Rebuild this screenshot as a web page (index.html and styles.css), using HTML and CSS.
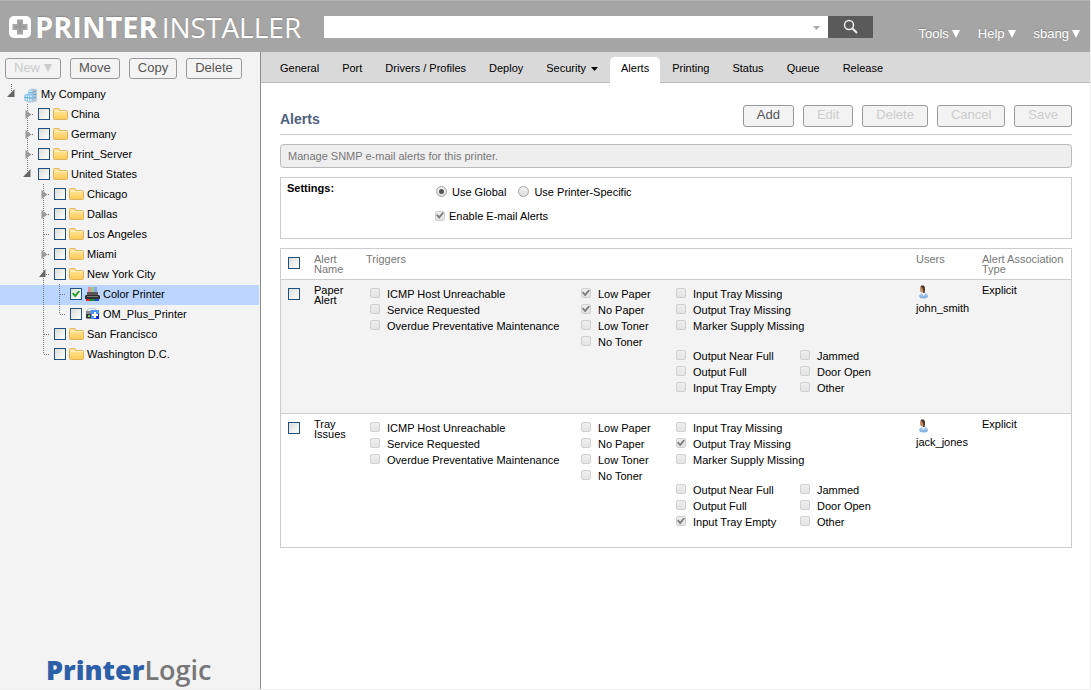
FILE: index.html
```html
<!DOCTYPE html>
<html lang="en">
<head>
<meta charset="utf-8">
<title>Printer Installer - Alerts</title>
<link rel="stylesheet" href="styles.css">
</head>
<body>
<svg class="defs" aria-hidden="true">
  <defs>
    <linearGradient id="gold" x1="0" y1="0" x2="0" y2="1"><stop offset="0" stop-color="#ffe9a6"/><stop offset="1" stop-color="#fbcb55"/></linearGradient>
    <linearGradient id="shirt" x1="0" y1="0" x2="0" y2="1"><stop offset="0" stop-color="#b9d6f3"/><stop offset="1" stop-color="#7eaadb"/></linearGradient>
  </defs>
  <symbol id="arrow" viewBox="0 0 8 8"><path d="M0 0h8L4 8z" fill="currentColor"/></symbol>
  <symbol id="folder" viewBox="0 0 15 15">
    <path d="M.500 3V2.500Q.500 1.500 1.500 1.500h4q1 0 1 1v1h7q1 0 1 1v7q0 1-1 1h-12q-1 0-1-1z" fill="url(#gold)" stroke="#e0b458"/>
    <path d="M1.500 4.500h12" stroke="#fff0bd"/>
  </symbol>
  <symbol id="building" viewBox="0 0 15 16">
    <path d="M5 2l4-1.500 5 .500v13l-5 1.500-4-1z" fill="#a8d6f3"/>
    <path d="M9 1l5 .500v12.500l-4 1z" fill="#b9c3cb"/>
    <path d="M1 7l4-1 5 1v7l-4 1.500-5-2z" fill="#8cc6ee"/>
    <path d="M6 3v3M8 3v3M3 8v5M5.500 8v6M8 8v6" stroke="#fff" stroke-width="1"/>
    <path d="M1 10l9 1M5 5h5M10.500 4h3M10.500 7h3M10.500 10h3" stroke="#4ba3dc" stroke-width="1"/>
    <path d="M0 13l5 2.500h5l5-2-5 .500-4 .500z" fill="#c9ced3"/>
  </symbol>
  <symbol id="printer" viewBox="0 0 15 15">
    <path d="M3 0h3v5H3z" fill="#e88b9d"/><path d="M6 0h3v5H6z" fill="#8dd18b"/><path d="M9 0h3v5H9z" fill="#8ca6ed"/>
    <path d="M2 5h11v4H2z" fill="#5b5555"/><path d="M1 8h13l1 1v3H0V9z" fill="#302f32"/>
    <path d="M2 9.500h11" stroke="#777"/>
    <path d="M1 12h4v2H1z" fill="#d82a2a"/><path d="M5 12h5v2H5z" fill="#168b33"/><path d="M10 12h4v2h-4z" fill="#2444d5"/>
  </symbol>
  <symbol id="plusprinter" viewBox="0 0 15 15">
    <path d="M3 1.500h7l1 2.500H2z" fill="#f5f8fb" stroke="#c3cad2"/>
    <path d="M1 4h7v8H2l-1-1z" fill="#858a92"/><path d="M1 7h5v4H1z" fill="#35393f"/>
    <path d="M3 8h2v2H3z" fill="#7ed04e"/>
    <rect x="6" y="3" width="8" height="9" fill="#4a92f5"/><path d="M9 12l5-6v6z" fill="#0b2ad0"/>
    <path d="M10 5v6M7 8h6" stroke="#fff" stroke-width="2"/>
  </symbol>
  <symbol id="user" viewBox="0 0 12 14">
    <path d="M1 11q1-3 4.500-3.500T10 11q.500 2-4 2.500-5 0-5-2.500z" fill="url(#shirt)"/>
    <path d="M3.500 7.500L5.500 11l2-3z" fill="#f1f5fa"/>
    <ellipse cx="4.500" cy="4" rx="2.500" ry="3.500" fill="#c08a62"/>
    <path d="M2.500 1.500Q3 .300 5 .500T7 5L6.500 8 5 8q1-3-.500-5z" fill="#4c3426"/>
  </symbol>
  <symbol id="line" viewBox="0 0 16 20"><path d="M8.500 0v20M9 10.500h6" class="dots"/></symbol>
  <symbol id="pipe" viewBox="0 0 16 20"><path d="M8.500 0v20" class="dots"/></symbol>
  <symbol id="end" viewBox="0 0 16 20"><path d="M8.500 0v10M9 10.500h6" class="dots"/></symbol>
  <symbol id="shut" viewBox="0 0 16 20"><path d="M8.500 0v20M9 10.500h6" class="dots"/><path d="M6.500 6l6 4.500-6 4.500z" fill="#999"/></symbol>
  <symbol id="open" viewBox="0 0 16 20"><path d="M8.500 0v7" class="dots"/><path d="M11.500 5v8H4z" fill="#666"/></symbol>
  <symbol id="openmid" viewBox="0 0 16 20"><path d="M8.500 0v20M9 10.500h6" class="dots"/><path d="M10.500 5v8H4z" fill="#666"/></symbol>
</svg>

<header class="topbar">
  <div class="brand">
    <svg class="brand-mark" viewBox="0 0 24 24" aria-hidden="true"><rect x="1" y="1" width="22" height="22" rx="5" fill="#fff"/><path d="M9 4.500h6V9h4.500v6H15v4.500H9V15H4.500V9H9z" fill="#a5a5a5"/><path d="M11 7h2v4h4v2h-4v4h-2v-4H7v-2h4z" fill="#999"/></svg>
    <span class="brand-bold">PRINTER</span><span class="brand-light">INSTALLER</span>
  </div>
  <form class="search" role="search">
    <input class="search-input" type="text" aria-label="Search">
    <svg class="search-caret" viewBox="0 0 7 4" aria-hidden="true"><path d="M0 0h7L3.500 4z" fill="#aaa"/></svg>
    <button class="search-button" type="button" aria-label="Search"><svg viewBox="0 0 16 16" aria-hidden="true"><circle cx="6" cy="6" r="4.500" fill="none" stroke="#eee" stroke-width="1.500"/><path d="M9.500 9.500l4.500 4.500" stroke="#eee" stroke-width="2"/></svg></button>
  </form>
  <nav class="account">
    <a href="#">Tools<svg class="arrow"><use href="#arrow"/></svg></a><a href="#">Help<svg class="arrow"><use href="#arrow"/></svg></a><a href="#">sbang<svg class="arrow"><use href="#arrow"/></svg></a>
  </nav>
</header>

<div class="workspace">
  <aside class="sidebar">
    <div class="tree-actions">
      <button class="btn" disabled>New<svg class="arrow"><use href="#arrow"/></svg></button><button class="btn">Move</button><button class="btn">Copy</button><button class="btn">Delete</button>
    </div>
    <ul class="tree">
      <li class="node root"><svg class="guide"><use href="#open"/></svg><svg class="icon"><use href="#building"/></svg><span>My Company</span></li>
      <li class="node l1"><svg class="guide"><use href="#shut"/></svg><label><input class="box" type="checkbox"><svg class="icon"><use href="#folder"/></svg>China</label></li>
      <li class="node l1"><svg class="guide"><use href="#shut"/></svg><label><input class="box" type="checkbox"><svg class="icon"><use href="#folder"/></svg>Germany</label></li>
      <li class="node l1"><svg class="guide"><use href="#shut"/></svg><label><input class="box" type="checkbox"><svg class="icon"><use href="#folder"/></svg>Print_Server</label></li>
      <li class="node l1"><svg class="guide"><use href="#open"/></svg><label><input class="box" type="checkbox"><svg class="icon"><use href="#folder"/></svg>United States</label></li>
      <li class="node l2"><svg class="guide"><use href="#shut"/></svg><label><input class="box" type="checkbox"><svg class="icon"><use href="#folder"/></svg>Chicago</label></li>
      <li class="node l2"><svg class="guide"><use href="#shut"/></svg><label><input class="box" type="checkbox"><svg class="icon"><use href="#folder"/></svg>Dallas</label></li>
      <li class="node l2"><svg class="guide"><use href="#line"/></svg><label><input class="box" type="checkbox"><svg class="icon"><use href="#folder"/></svg>Los Angeles</label></li>
      <li class="node l2"><svg class="guide"><use href="#shut"/></svg><label><input class="box" type="checkbox"><svg class="icon"><use href="#folder"/></svg>Miami</label></li>
      <li class="node l2"><svg class="guide"><use href="#openmid"/></svg><label><input class="box" type="checkbox"><svg class="icon"><use href="#folder"/></svg>New York City</label></li>
      <li class="node l2 selected"><svg class="guide"><use href="#pipe"/></svg><svg class="guide"><use href="#line"/></svg><label><input class="box" type="checkbox" checked><svg class="icon"><use href="#printer"/></svg>Color Printer</label></li>
      <li class="node l2"><svg class="guide"><use href="#pipe"/></svg><svg class="guide"><use href="#end"/></svg><label><input class="box" type="checkbox"><svg class="icon"><use href="#plusprinter"/></svg>OM_Plus_Printer</label></li>
      <li class="node l2"><svg class="guide"><use href="#line"/></svg><label><input class="box" type="checkbox"><svg class="icon"><use href="#folder"/></svg>San Francisco</label></li>
      <li class="node l2"><svg class="guide"><use href="#end"/></svg><label><input class="box" type="checkbox"><svg class="icon"><use href="#folder"/></svg>Washington D.C.</label></li>
    </ul>
    <div class="vendor"><span class="vendor-bold">Printer</span><span class="vendor-light">Logic</span></div>
  </aside>

  <main class="main">
    <nav class="tabs">
      <a href="#">General</a><a href="#">Port</a><a href="#">Drivers / Profiles</a><a href="#">Deploy</a><a href="#">Security<svg class="tab-caret" viewBox="0 0 7 4" aria-hidden="true"><path d="M0 0h7L3.500 4z"/></svg></a><a href="#" class="active" aria-current="page">Alerts</a><a href="#">Printing</a><a href="#">Status</a><a href="#">Queue</a><a href="#">Release</a>
    </nav>
    <section class="content">
      <div class="heading">
        <h1>Alerts</h1>
        <div class="actions">
          <button class="btn wide">Add</button><button class="btn wide" disabled>Edit</button><button class="btn wide" disabled>Delete</button><button class="btn wide" disabled>Cancel</button><button class="btn wide" disabled>Save</button>
        </div>
      </div>
      <p class="info">Manage SNMP e-mail alerts for this printer.</p>
      <div class="settings">
        <strong>Settings:</strong>
        <div class="options">
          <div class="radios">
            <label><input class="radio" type="radio" name="scope" checked>Use Global</label>
            <label><input class="radio" type="radio" name="scope">Use Printer-Specific</label>
          </div>
          <label class="enable"><input class="tick" type="checkbox" checked disabled>Enable E-mail Alerts</label>
        </div>
      </div>
      <table class="alerts">
        <colgroup><col class="c-check"><col class="c-name"><col><col class="c-users"><col class="c-type"></colgroup>
        <thead>
          <tr><th class="pick"><input class="box" type="checkbox" aria-label="Select all alerts"></th><th>Alert Name</th><th>Triggers</th><th>Users</th><th>Alert Association Type</th></tr>
        </thead>
        <tbody>
          <tr class="shaded">
            <td class="pick"><input class="box" type="checkbox" aria-label="Select Paper Alert"></td>
            <td>Paper<br>Alert</td>
            <td class="trigger-cell"><div class="triggers">
              <div class="group">
                <label><input class="tick" type="checkbox" disabled>ICMP Host Unreachable</label>
                <label><input class="tick" type="checkbox" disabled>Service Requested</label>
                <label><input class="tick" type="checkbox" disabled>Overdue Preventative Maintenance</label>
              </div>
              <div class="group">
                <label><input class="tick" type="checkbox" checked disabled>Low Paper</label>
                <label><input class="tick" type="checkbox" checked disabled>No Paper</label>
                <label><input class="tick" type="checkbox" disabled>Low Toner</label>
                <label><input class="tick" type="checkbox" disabled>No Toner</label>
              </div>
              <div class="group">
                <label><input class="tick" type="checkbox" disabled>Input Tray Missing</label>
                <label><input class="tick" type="checkbox" disabled>Output Tray Missing</label>
                <label><input class="tick" type="checkbox" disabled>Marker Supply Missing</label>
                <label class="apart"><input class="tick" type="checkbox" disabled>Output Near Full</label>
                <label><input class="tick" type="checkbox" disabled>Output Full</label>
                <label><input class="tick" type="checkbox" disabled>Input Tray Empty</label>
              </div>
              <div class="group low">
                <label><input class="tick" type="checkbox" disabled>Jammed</label>
                <label><input class="tick" type="checkbox" disabled>Door Open</label>
                <label><input class="tick" type="checkbox" disabled>Other</label>
              </div>
            </div></td>
            <td><svg class="user-icon"><use href="#user"/></svg>john_smith</td>
            <td>Explicit</td>
          </tr>
          <tr>
            <td class="pick"><input class="box" type="checkbox" aria-label="Select Tray Issues"></td>
            <td>Tray<br>Issues</td>
            <td class="trigger-cell"><div class="triggers">
              <div class="group">
                <label><input class="tick" type="checkbox" disabled>ICMP Host Unreachable</label>
                <label><input class="tick" type="checkbox" disabled>Service Requested</label>
                <label><input class="tick" type="checkbox" disabled>Overdue Preventative Maintenance</label>
              </div>
              <div class="group">
                <label><input class="tick" type="checkbox" disabled>Low Paper</label>
                <label><input class="tick" type="checkbox" disabled>No Paper</label>
                <label><input class="tick" type="checkbox" disabled>Low Toner</label>
                <label><input class="tick" type="checkbox" disabled>No Toner</label>
              </div>
              <div class="group">
                <label><input class="tick" type="checkbox" disabled>Input Tray Missing</label>
                <label><input class="tick" type="checkbox" checked disabled>Output Tray Missing</label>
                <label><input class="tick" type="checkbox" disabled>Marker Supply Missing</label>
                <label class="apart"><input class="tick" type="checkbox" disabled>Output Near Full</label>
                <label><input class="tick" type="checkbox" disabled>Output Full</label>
                <label><input class="tick" type="checkbox" checked disabled>Input Tray Empty</label>
              </div>
              <div class="group low">
                <label><input class="tick" type="checkbox" disabled>Jammed</label>
                <label><input class="tick" type="checkbox" disabled>Door Open</label>
                <label><input class="tick" type="checkbox" disabled>Other</label>
              </div>
            </div></td>
            <td><svg class="user-icon"><use href="#user"/></svg>jack_jones</td>
            <td>Explicit</td>
          </tr>
        </tbody>
      </table>
    </section>
  </main>
</div>
</body>
</html>
```
FILE: styles.css
```css
* { box-sizing: border-box; }

body {
  margin: 0;
  min-height: 100vh;
  display: flex;
  flex-direction: column;
  border-right: 1px solid #f0f0f0;
  border-bottom: 1px solid #f0f0f0;
  background: #fff;
  color: #000;
  font: 11px/16px "Liberation Sans", Arial, sans-serif;
}

a { color: inherit; text-decoration: none; }
svg { display: block; flex: none; }
input, button { margin: 0; font-family: inherit; }
.defs { position: absolute; width: 0; height: 0; }
.dots { stroke: #777; stroke-dasharray: 1 1; fill: none; }
.arrow { display: inline-block; width: 8px; height: 8px; margin-left: 4px; }

/* Top bar */
.topbar {
  display: flex;
  align-items: center;
  height: 52px;
  padding: 1px 10px 0 8px;
  border-top: 1px solid #b4b4b4;
  background: #a5a5a5;
  color: #fff;
}
.brand {
  display: flex;
  align-items: center;
  width: 316px;
  font: 29px/36px "Open Sans", sans-serif;
  text-shadow: 0 -1px 1px #8c8c8c;
}
.brand-mark { width: 24px; height: 24px; margin-right: 3px; }
.brand-bold { font-weight: 700; }
.brand-light { margin-left: 4px; font-size: 28px; font-weight: 400; }
.search { position: relative; display: flex; flex: 1; height: 22px; }
.search-input { flex: 1; min-width: 0; padding: 0 20px 0 6px; border: 0; background: #fff; }
.search-caret { position: absolute; right: 53px; top: 10px; width: 7px; height: 4px; }
.search-button {
  display: flex;
  justify-content: center;
  align-items: center;
  width: 45px;
  padding: 0;
  border: 0;
  background: #5a5a5a;
}
.search-button svg { width: 16px; height: 16px; }
.account {
  display: flex;
  gap: 18px;
  margin-left: 45px;
  padding-top: 14px;
  font-size: 13px;
  text-shadow: 0 -1px 1px #808080;
}
.account .arrow { margin-left: 3px; }

/* Buttons */
.btn {
  height: 21px;
  padding: 0 8px 1px;
  border: 1px solid #999;
  border-radius: 3px;
  background: #f3f3f3;
  color: #555;
  font-size: 13px;
  line-height: 18px;
}
.btn.wide { height: 22px; padding: 0 13px 2px; }
.btn:disabled { color: #ccc; }

/* Sidebar */
.workspace { display: flex; flex: 1; }
.sidebar {
  display: flex;
  flex-direction: column;
  width: 261px;
  border-right: 1px solid #8c8c8c;
  background: #f3f3f3;
}
.tree-actions { display: flex; gap: 9px; padding: 6px 5px; }
.tree { flex: 1; margin: 0; padding: 0 1px 0 0; list-style: none; }
.node { display: flex; align-items: center; height: 20px; padding-left: 3px; }
.node label { display: flex; align-items: center; gap: 3px; padding-left: 3px; }
.node label, .node span { line-height: 18px; padding-bottom: 2px; }
.node.root .icon { margin: 0 3px 0 4px; }
.node.l1 { padding-left: 19px; }
.node.l2 { padding-left: 35px; }
.node.selected { background: #bad5ff; }
.guide { width: 16px; height: 20px; margin-top: -2px; }
.icon { width: 15px; height: 15px; }
.vendor { padding: 0 0 1px 46px; font: 27px/36px "Open Sans", sans-serif; }
.vendor-bold { color: #2d5fa8; font-weight: 800; }
.vendor-light { color: #777; font-weight: 600; }

/* Check boxes and radios */
.box, .tick, .radio { appearance: none; display: grid; place-items: center; flex: none; }
.box {
  width: 12px;
  height: 12px;
  border: 1px solid #1c5180;
  background: linear-gradient(135deg, #dcdcd7, #fff);
}
.box:checked::after, .tick:checked::after {
  content: "";
  width: 8px;
  height: 7px;
  background: #21a121;
  clip-path: polygon(0 45%, 18% 30%, 38% 58%, 82% 0, 100% 15%, 40% 100%);
}
.tick {
  width: 10px;
  height: 10px;
  border: 1px solid #d0d0d0;
  border-radius: 2px;
  background: linear-gradient(#eee, #e4e4e4);
}
.tick:checked::after { background: #808080; }
.radio {
  width: 11px;
  height: 11px;
  border: 1px solid #a5a5a5;
  border-radius: 50%;
  background: linear-gradient(#f3f3f3, #ddd);
}
.radio:checked::after { content: ""; width: 5px; height: 5px; border-radius: 50%; background: #555; }

/* Tabs */
.main { flex: 1; min-width: 0; }
.tabs {
  display: flex;
  gap: 1px;
  height: 31px;
  padding: 5px 8px 0;
  border-bottom: 1px solid #bbb;
  background: #d9d9d9;
}
.tabs a { display: flex; align-items: center; height: 26px; padding: 0 11px 4px; }
.tabs .active { border-radius: 5px 5px 0 0; background: #fff; }
.tab-caret { width: 7px; height: 4px; margin: 1px 0 0 5px; }

/* Content */
.content { padding: 22px 18px 20px 19px; }
.heading {
  display: flex;
  justify-content: space-between;
  height: 30px;
  border-bottom: 1px solid #ccc;
}
h1 { margin: 0; color: #4f5f7f; font-size: 14px; line-height: 28px; }
.actions { display: flex; gap: 9px; }
.info {
  margin: 9px 0;
  padding: 3px 7px;
  border: 1px solid #bbb;
  border-radius: 4px;
  background: #eee;
  color: #777;
}
.settings { display: flex; padding: 2px 6px 14px; border: 1px solid #ccc; }
.settings strong { width: 148px; }
.options { padding-top: 4px; }
.options label { display: flex; align-items: center; }
.radios { display: flex; gap: 11px; margin-bottom: 8px; }
.radio { margin: 0 5px 1px 1px; }
.enable .tick { margin: 0 4px 1px 0; }

/* Alerts table */
.alerts {
  width: 100%;
  margin-top: 9px;
  border: 1px solid #ccc;
  border-spacing: 0;
  table-layout: fixed;
  line-height: 10px;
}
.c-check { width: 33px; }
.c-name { width: 52px; }
.c-users { width: 66px; }
.c-type { width: 89px; }
.alerts th, .alerts td { padding: 5px 0; text-align: left; vertical-align: top; }
.alerts th { padding-right: 4px; color: #777; font-weight: 400; }
.alerts td { border-top: 1px solid #ccc; }
.alerts .pick { padding: 8px 0 0 7px; }
.alerts .trigger-cell { padding: 6px 0 17px 4px; }
.shaded { background: #f3f3f3; }
.triggers { display: grid; grid-template-columns: 211fr 95fr 124fr 116fr; line-height: 16px; }
.group label { display: flex; align-items: center; white-space: nowrap; }
.group { min-width: 0; }
.group .tick { margin: 0 7px 2px 0; }
.group .apart { margin-top: 14px; }
.group.low { padding-top: 62px; }
.user-icon { width: 12px; height: 14px; margin: 0 0 4px 2px; }
```
